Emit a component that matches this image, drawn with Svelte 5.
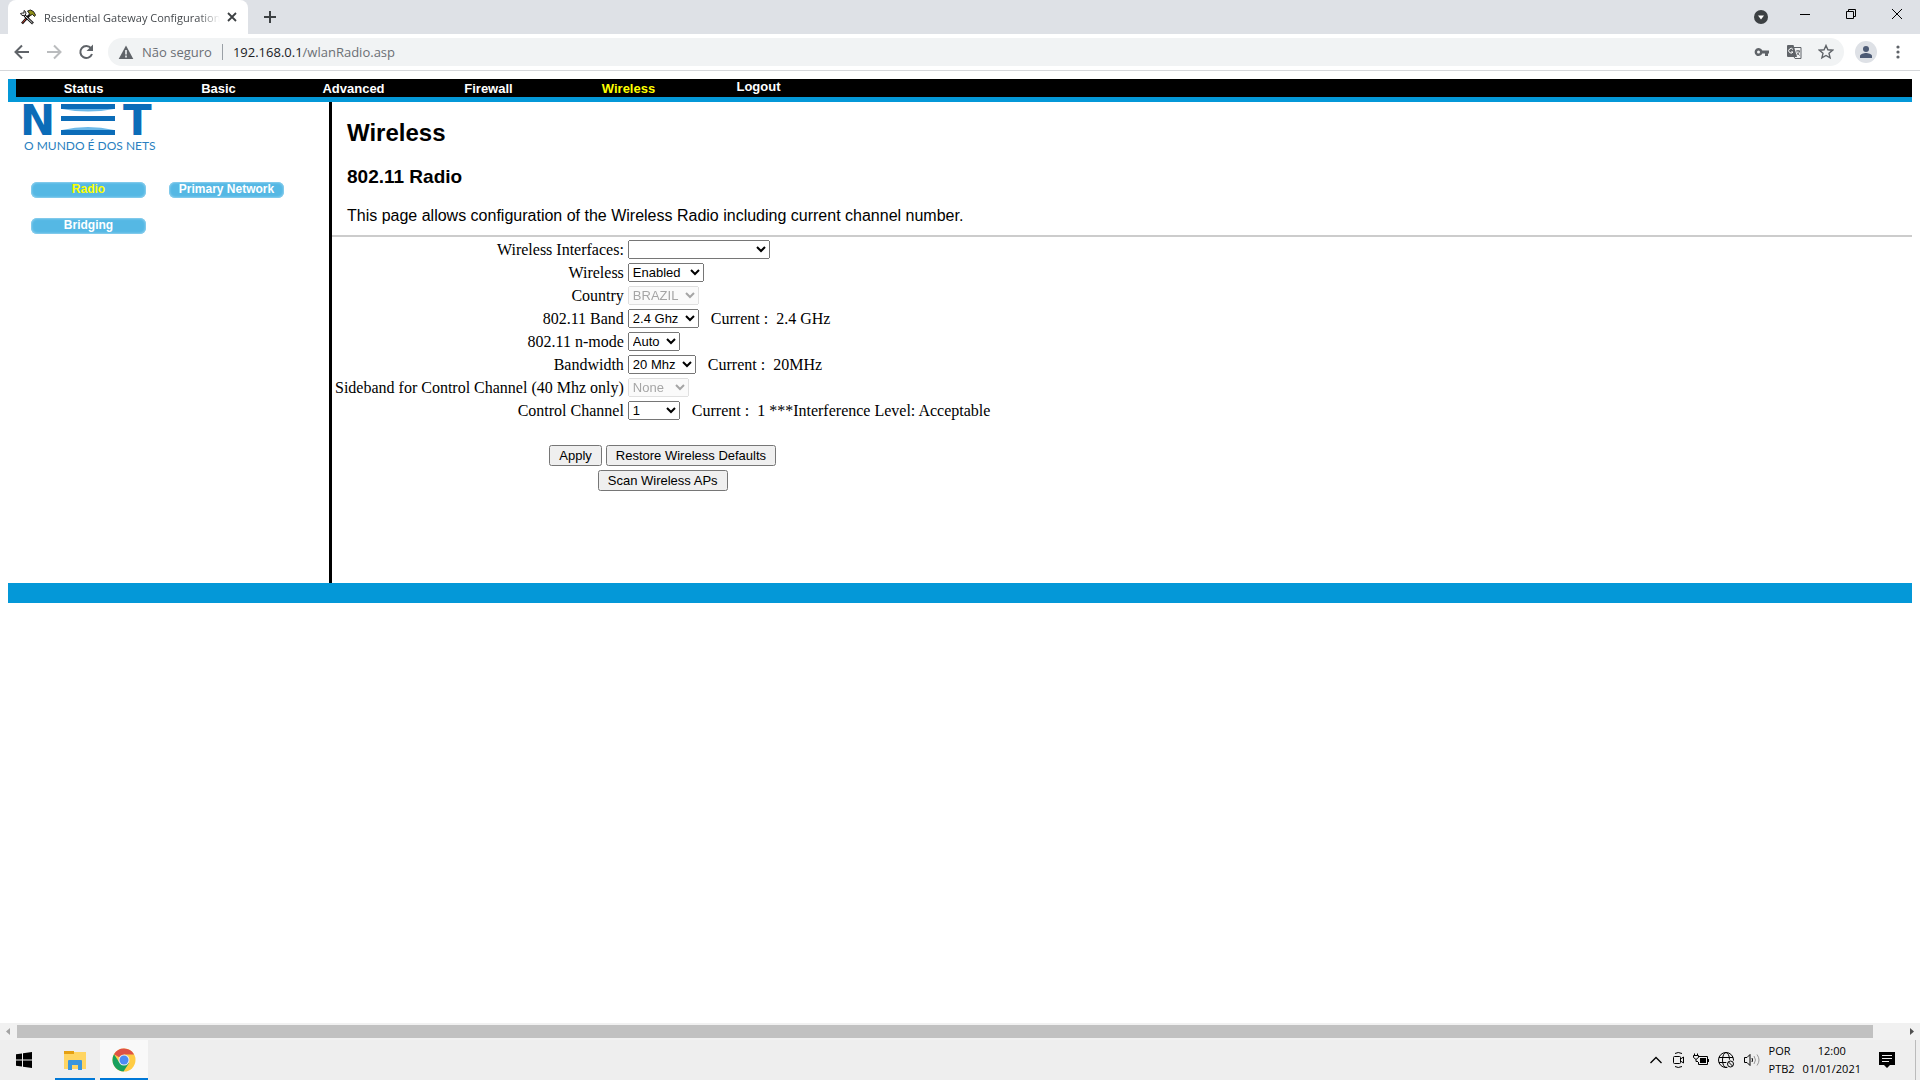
<script>
  const NAV = [
    { label: 'Status' },
    { label: 'Basic' },
    { label: 'Advanced' },
    { label: 'Firewall' },
    { label: 'Wireless', active: true },
    { label: 'Logout', raised: true },
  ]

  const SIDE = [
    { label: 'Radio', active: true },
    { label: 'Primary Network' },
    { label: 'Bridging' },
  ]

  const FIELDS = [
    { id: 'interfaces', label: 'Wireless Interfaces:', options: [''], width: 142 },
    { id: 'wireless', label: 'Wireless', options: ['Enabled', 'Disabled'], width: 76 },
    { id: 'country', label: 'Country', options: ['BRAZIL'], width: 71, disabled: true },
    { id: 'band', label: '802.11 Band', options: ['2.4 Ghz', '5 Ghz'], width: 71, current: '2.4 GHz' },
    { id: 'nmode', label: '802.11 n-mode', options: ['Auto', 'Off'], width: 52 },
    { id: 'bandwidth', label: 'Bandwidth', options: ['20 Mhz', '40 Mhz'], width: 68, current: '20MHz' },
    { id: 'sideband', label: 'Sideband for Control Channel (40 Mhz only)', options: ['None'], width: 61, disabled: true },
    { id: 'channel', label: 'Control Channel', options: ['1', '6', '11'], width: 52, current: '1 ***Interference Level: Acceptable' },
  ]
</script>

<div class="screen">
  <!-- Tab strip -->
  <header class="tabs">
    <div class="tab">
      <svg width="16" height="16" viewBox="0 0 16 16" fill="none">
        <path d="M2 14.500L9.500 6" stroke="#111" stroke-width="2.600"/>
        <path d="M2.500 13.800L6 9.800" stroke="#c0392b" stroke-width="1"/>
        <path d="M4.500 6.500L13 14.500" stroke="#111" stroke-width="2.600"/>
        <path d="M5 7L12.500 14" stroke="#e4e4e4" stroke-width="1"/>
        <path d="M.5 4.500L2 6.500h2.500L6 5 5.500 2.500 4 1.500v2.500H2.500z" fill="#e4e4e4" stroke="#111" stroke-width=".9"/>
        <path d="M7.500 2l3-1 3 1.500 2 3.500-1 1.500-2-2L10 6.500 9 4z" fill="#8f8f1a" stroke="#111" stroke-width=".9"/>
      </svg>
      <span class="tab-title">Residential Gateway Configuration</span>
      <button class="plain" aria-label="Close tab">
        <svg width="16" height="16" viewBox="0 0 16 16"><path d="M4 4l8 8M12 4l-8 8" stroke="#3c4043" stroke-width="1.800"/></svg>
      </button>
    </div>
    <button class="plain new-tab" aria-label="New tab">
      <svg width="16" height="16" viewBox="0 0 16 16"><path d="M8 2v12M2 8h12" stroke="#3c4043" stroke-width="2"/></svg>
    </button>
    <div class="window-buttons">
      <button class="plain" aria-label="Search tabs">
        <svg width="16" height="16" viewBox="0 0 16 16"><circle cx="8" cy="8" r="7" fill="#3c4043"/><path d="M5 6.500h6l-3 4z" fill="#fff"/></svg>
      </button>
      <button class="plain" aria-label="Minimize">
        <svg width="12" height="12" viewBox="0 0 12 12"><path d="M1 6.500h10" stroke="#000"/></svg>
      </button>
      <button class="plain" aria-label="Restore">
        <svg width="12" height="12" viewBox="0 0 12 12" fill="none" stroke="#000"><path d="M1.500 3.500h7v7h-7zM3.500 3.500v-2h7v7h-2"/></svg>
      </button>
      <button class="plain" aria-label="Close">
        <svg width="12" height="12" viewBox="0 0 12 12"><path d="M1 1l10 10M11 1L1 11" stroke="#000"/></svg>
      </button>
    </div>
  </header>

  <!-- Address bar -->
  <div class="toolbar">
    <button class="plain" aria-label="Back">
      <svg width="20" height="20" viewBox="0 0 20 20" fill="none" stroke="#5f6368" stroke-width="2"><path d="M17 10H4M10 3.500L3.500 10l6.500 6.500"/></svg>
    </button>
    <button class="plain" aria-label="Forward">
      <svg width="20" height="20" viewBox="0 0 20 20" fill="none" stroke="#babcbe" stroke-width="2"><path d="M3 10h13M10 3.500l6.500 6.500-6.500 6.500"/></svg>
    </button>
    <button class="plain" aria-label="Reload">
      <svg width="20" height="20" viewBox="0 0 20 20"><path d="M15 6.200A6 6 0 1 0 16 12" fill="none" stroke="#5f6368" stroke-width="2"/><path d="M17 2.500V9h-6.500z" fill="#5f6368"/></svg>
    </button>
    <div class="omnibox">
      <svg width="16" height="16" viewBox="0 0 16 16"><path d="M8 1.500L15.300 15H.7z" fill="#5f6368"/><path d="M8 6v4.500M8 11.500v2" stroke="#f1f3f4" stroke-width="1.600"/></svg>
      <span class="insecure">Não seguro</span>
      <span class="url"><b>192.168.0.1</b>/wlanRadio.asp</span>
      <button class="plain" aria-label="Passwords">
        <svg width="16" height="16" viewBox="0 0 16 16"><path d="M8.300 6.500A4 4 0 1 0 8.300 9.500H11V12h3V9.500h1v-3zM4.500 9.500a1.500 1.500 0 1 1 0-3 1.500 1.500 0 0 1 0 3z" fill="#5f6368" fill-rule="evenodd"/></svg>
      </button>
      <button class="plain" aria-label="Translate">
        <svg width="16" height="16" viewBox="0 0 16 16" fill="none"><path d="M2 1h5.500L11 13H2a1 1 0 0 1-1-1V2a1 1 0 0 1 1-1z" fill="#5f6368"/><path d="M8 3.500h7v11H9L7.500 12" stroke="#5f6368"/><path d="M7 5.500A2.300 2.300 0 1 0 7 8H5" stroke="#fff"/><path d="M10 7h4M12 6v1M13.500 7c-.5 2-1.500 3-3 4M11 8.500l2.500 3" stroke="#5f6368"/></svg>
      </button>
      <button class="plain" aria-label="Bookmark">
        <svg width="16" height="16" viewBox="0 0 16 16"><path d="M8 1.500l1.900 4.300 4.700.4-3.600 3.100 1.100 4.600L8 11.500l-4.100 2.400L5 9.300 1.400 6.200l4.700-.4z" fill="none" stroke="#5f6368" stroke-width="1.400"/></svg>
      </button>
    </div>
    <button class="plain" aria-label="Profile">
      <svg width="22" height="22" viewBox="0 0 22 22"><circle cx="11" cy="11" r="11" fill="#dee1e6"/><circle cx="11" cy="8" r="3" fill="#4d5b75"/><path d="M5 17v-2c0-2 4-3 6-3s6 1 6 3v2z" fill="#4d5b75"/></svg>
    </button>
    <button class="plain" aria-label="Menu">
      <svg width="16" height="16" viewBox="0 0 16 16" fill="#5f6368"><circle cx="8" cy="3" r="1.600"/><circle cx="8" cy="8" r="1.600"/><circle cx="8" cy="13" r="1.600"/></svg>
    </button>
  </div>

  <!-- Router page -->
  <div class="page">
    <nav class="nav">
      {#each NAV as item}
        <a href="#{item.label}" class:active={item.active} class:raised={item.raised}>{item.label}</a>
      {/each}
    </nav>

    <div class="body">
      <aside class="side">
        <svg class="logo" width="130" height="50" viewBox="0 0 130 50">
          <g fill="#0b6cb8">
            <text x="-4" y="33" class="brand">N</text>
            <path d="M37 2h54v5H37zM37 14h54v5H37zM37 28h54v5H37z"/>
            <text x="99" y="33" class="brand">T</text>
          </g>
          <path d="M38 7h52q-26 5-52 0zM38 28q26-6 52 0z" fill="#6db9e8"/>
          <text x="0" y="48" class="slogan">O MUNDO É DOS NETS</text>
        </svg>
        <div class="pills">
          {#each SIDE as item}
            <a href="#{item.label}" class="pill" class:active={item.active}>{item.label}</a>
          {/each}
        </div>
      </aside>

      <main class="main">
        <div class="intro">
          <h1>Wireless</h1>
          <h2>802.11 Radio</h2>
          <p>This page allows configuration of the Wireless Radio including current channel number.</p>
        </div>

        <form class="form" onsubmit={(e) => e.preventDefault()}>
          <div class="fields">
            {#each FIELDS as field}
              <label for={field.id}>{field.label}</label>
              <div class="value">
                <select id={field.id} disabled={field.disabled} style="width: {field.width}px">
                  {#each field.options as option}
                    <option>{option}</option>
                  {/each}
                </select>
                {#if field.current}
                  <span class="current">Current :&nbsp; {field.current}</span>
                {/if}
              </div>
            {/each}
          </div>
          <div class="actions">
            <div class="action-row">
              <button type="submit">Apply</button>
              <button type="button">Restore Wireless Defaults</button>
            </div>
            <button type="button">Scan Wireless APs</button>
          </div>
        </form>
      </main>
    </div>
    <div class="page-foot"></div>
  </div>

  <div class="scrollbar">
    <svg width="17" height="17" viewBox="0 0 17 17"><path d="M10 5v7L6 8.500z" fill="#a3a3a3"/></svg>
    <div class="track"><div class="thumb"></div></div>
    <svg width="17" height="17" viewBox="0 0 17 17"><path d="M7 5v7l4-3.500z" fill="#505050"/></svg>
  </div>

  <!-- Taskbar -->
  <footer class="taskbar">
    <button class="plain start" aria-label="Start">
      <svg width="16" height="16" viewBox="0 0 16 16"><path d="M0 2.300L6 1.500v6H0zM7 1.300L16 0v7.500H7zM0 8.500h6v6l-6-.8zM7 8.500h9V16l-9-1.300z"/></svg>
    </button>
    <button class="plain task" aria-label="File Explorer">
      <svg width="22" height="20" viewBox="0 0 22 20"><path d="M0 2h22v17H0z" fill="#ffd562"/><path d="M0 1h10v3H0z" fill="#e5a012"/><path d="M4 20v-9q0-1 1-1h12q1 0 1 1v9h-4v-5H8v5z" fill="#3a95dd"/></svg>
    </button>
    <button class="plain task current-task" aria-label="Google Chrome">
      <svg width="24" height="24" viewBox="0 0 24 24"><circle cx="12" cy="12" r="11.500" fill="#fc4"/><path d="M12 12L2 6.300A11.500 11.500 0 0 1 22 6.500H12z" fill="#de5246"/><path d="M12 12L17 15 11.500 23.500A11.500 11.500 0 0 1 2 6.300L7 14z" fill="#17a05d"/><circle cx="12" cy="12" r="5.500" fill="#eee"/><circle cx="12" cy="12" r="4.500" fill="#4c8bf5"/></svg>
    </button>
    <div class="tray">
      <svg width="14" height="16" viewBox="0 0 14 16" fill="none" stroke="#000" stroke-width="1.300"><path d="M1.500 11L7 5.500l5.500 5.500"/></svg>
      <svg width="14" height="18" viewBox="0 0 14 18" fill="none" stroke="#000"><path d="M4 2.500q3-2 7 0M4 15.500q3 2 7 0"/><rect x="2.500" y="5.500" width="7" height="7" rx="1"/><path d="M9.500 8l3-2v6l-3-2"/></svg>
      <svg width="16" height="16" viewBox="0 0 16 16" fill="none" stroke="#000"><path d="M6 4.500h8.500v8h-9V10M15.500 7v3M.5 3.500h5v2L3.500 7h-1L.5 5.500zM1.500 1.500v2M4.500 1.500v2M3 7v2.500h2"/><path d="M7 6h6v5H7z" fill="#000" stroke="none"/></svg>
      <svg width="18" height="18" viewBox="0 0 18 18" fill="none" stroke="#000"><circle cx="9" cy="9" r="7.500"/><ellipse cx="9" cy="9" rx="3.500" ry="7.500"/><path d="M2 6.500h14M2 11.500h9"/><circle cx="13.500" cy="13" r="4.500" fill="#eee" stroke="none"/><circle cx="13.500" cy="13" r="3" /><path d="M11.500 11l4 4"/></svg>
      <svg width="18" height="16" viewBox="0 0 18 16" fill="none" stroke="#000"><path d="M1.500 5.500H4l3-3v11l-3-3H1.500z"/><path d="M9 6q1 2 0 4"/><path d="M11 4q3 4 0 8M14 2.500q4 5.500 0 11" stroke="#999"/></svg>
      <div class="lang"><span>POR</span><span>PTB2</span></div>
      <div class="clock"><span>12:00</span><span>01/01/2021</span></div>
      <svg class="notes" width="16" height="16" viewBox="0 0 16 16"><path d="M0 0h16v13h-5l-3 3-3-3H0z"/><path d="M3 3.500h10M3 6.500h10M3 9.500h7" stroke="#eee"/></svg>
    </div>
  </footer>
</div>

<style>
  :global(body) {
    margin: 0;
    background: #fff;
  }

  .screen {
    display: flex;
    flex-direction: column;
    min-height: 100vh;
    font-family: "Segoe UI", "Open Sans", sans-serif;
    color: #000;
  }

  .plain {
    display: flex;
    align-items: center;
    justify-content: center;
    padding: 0;
    border: 0;
    background: none;
  }

  svg {
    display: block;
    flex-shrink: 0;
  }

  /* Tab strip */
  .tabs {
    display: flex;
    align-items: center;
    height: 34px;
    padding-left: 8px;
    background: #dee1e6;
  }

  .tab {
    display: flex;
    align-items: center;
    box-sizing: border-box;
    width: 240px;
    height: 34px;
    padding: 0 8px 0 12px;
    border-radius: 8px 8px 0 0;
    background: #fff;
  }

  .tab-title {
    flex: 1;
    margin: 0 4px 0 8px;
    overflow: hidden;
    white-space: nowrap;
    font-size: 11px;
    color: #45494d;
    mask-image: linear-gradient(to right, #000 88%, transparent);
  }

  .new-tab {
    margin-left: 14px;
  }

  .window-buttons {
    display: flex;
    align-items: center;
    margin-left: auto;
  }

  .window-buttons button {
    width: 46px;
    height: 28px;
    margin-bottom: 6px;
  }

  .window-buttons button:first-child {
    width: 42px;
    margin-bottom: 0;
  }

  /* Address bar */
  .toolbar {
    display: flex;
    align-items: center;
    box-sizing: border-box;
    height: 37px;
    padding: 0 12px;
    border-bottom: 1px solid #d5d7da;
    background: #fff;
  }

  .toolbar > button {
    width: 20px;
    margin-right: 12px;
  }

  .toolbar > button:last-child {
    margin: 0;
  }

  .omnibox {
    display: flex;
    align-items: center;
    flex: 1;
    height: 28px;
    margin-right: 12px;
    padding: 0 10px;
    border-radius: 14px;
    background: #f1f3f4;
    font-size: 13px;
  }

  .omnibox button {
    margin-left: 16px;
  }

  .insecure {
    margin-left: 8px;
    padding-right: 10px;
    border-right: 1px solid #9aa0a6;
    line-height: 16px;
    color: #6b6f74;
  }

  .url {
    flex: 1;
    margin-left: 10px;
    color: #6b6f74;
  }

  .url b {
    font-weight: 400;
    color: #202124;
  }

  /* Router page */
  .page {
    flex: 1;
    padding: 8px;
    font-family: Arial, "Liberation Sans", sans-serif;
  }

  .nav {
    display: flex;
    height: 18px;
    border-left: 8px solid #0498d8;
    background: #000;
  }

  .nav a {
    width: 135px;
    text-align: center;
    text-decoration: none;
    font-size: 13px;
    font-weight: 700;
    line-height: 19px;
    color: #fff;
  }

  .nav .active {
    color: #ff0;
    text-indent: 10px;
  }

  .nav .raised {
    line-height: 15px;
  }

  .body {
    display: flex;
    min-height: 481px;
    border-top: 5px solid #0498d8;
  }

  .side {
    box-sizing: border-box;
    width: 324px;
    flex-shrink: 0;
    border-right: 3px solid #000;
  }

  .logo {
    margin-left: 16px;
    overflow: visible;
  }

  .brand {
    font-family: "DejaVu Sans", sans-serif;
    font-size: 42px;
    font-weight: 700;
  }

  .slogan {
    font-family: Lato, sans-serif;
    font-size: 12px;
    fill: #2a7fc0;
  }

  .pills {
    display: grid;
    grid-template-columns: 115px 115px;
    gap: 20px 23px;
    padding: 30px 23px 0;
  }

  .pill {
    height: 16px;
    border-radius: 6px;
    background: #55b8e4;
    box-shadow: inset 0 0 2px 1px #8fd0ee;
    text-align: center;
    text-decoration: none;
    font-size: 12px;
    font-weight: 700;
    line-height: 14px;
    color: #fff;
  }

  .pill.active {
    color: #ff0;
  }

  .main {
    flex: 1;
  }

  .intro {
    padding: 17px 15px 9px;
    border-bottom: 2px solid #ccc;
  }

  h1 {
    margin: 0 0 19px;
    font-size: 24px;
    line-height: 28px;
  }

  h2 {
    margin: 0 0 18px;
    font-size: 19px;
    line-height: 22px;
  }

  p {
    margin: 0;
    font-size: 16px;
    line-height: 20px;
  }

  .form {
    display: flex;
    flex-direction: column;
    width: max-content;
    padding: 1px 3px;
  }

  .fields {
    display: grid;
    grid-template-columns: max-content max-content;
    grid-auto-rows: 23px;
    align-items: center;
    column-gap: 4px;
    font-family: "Times New Roman", "Liberation Serif", serif;
    font-size: 16px;
  }

  .fields label {
    text-align: right;
  }

  .value {
    display: flex;
    align-items: center;
  }

  .current {
    margin-left: 12px;
  }

  select {
    height: 19px;
    margin: 0;
    font-family: Arial, "Liberation Sans", sans-serif;
    font-size: 13px;
  }

  .actions {
    display: flex;
    flex-direction: column;
    align-items: center;
    gap: 4px;
    margin-top: 23px;
  }

  .action-row {
    display: flex;
    gap: 4px;
  }

  .actions button {
    height: 21px;
    margin: 0;
    padding: 1px 8px;
    font-family: Arial, "Liberation Sans", sans-serif;
    font-size: 13px;
  }

  .page-foot {
    height: 20px;
    background: #0498d8;
  }

  /* Horizontal scrollbar */
  .scrollbar {
    display: flex;
    align-items: center;
    height: 17px;
    background: #f1f1f1;
  }

  .track {
    flex: 1;
  }

  .thumb {
    width: 98.400%;
    height: 13px;
    background: #c1c1c1;
  }

  /* Taskbar */
  .taskbar {
    display: flex;
    height: 40px;
    background: #eee;
    font-size: 11px;
  }

  .start {
    width: 48px;
    margin-right: 7px;
  }

  .task {
    box-sizing: border-box;
    width: 40px;
    margin-right: 5px;
    padding-top: 2px;
    border-bottom: 2px solid #0078d7;
  }

  .current-task {
    width: 48px;
    background: #f9f9f9;
  }

  .tray {
    display: flex;
    align-items: center;
    gap: 8px;
    margin-left: auto;
    margin-right: 4px;
    padding-right: 20px;
    border-right: 1px solid #bbb;
  }

  .lang,
  .clock {
    display: flex;
    flex-direction: column;
    text-align: center;
    line-height: 18px;
  }

  .lang {
    text-align: left;
  }

  .notes {
    margin-left: 10px;
  }
</style>
